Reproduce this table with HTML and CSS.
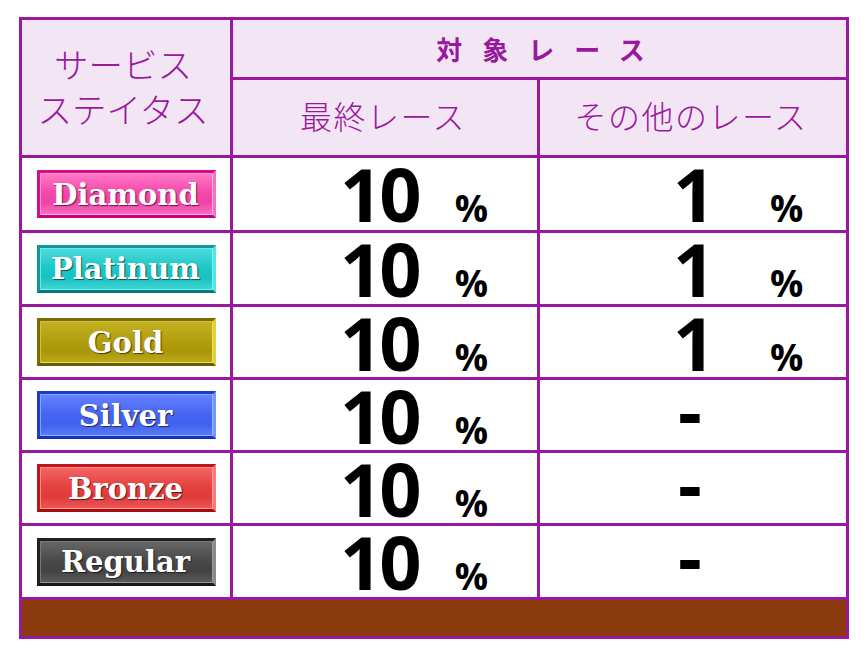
FILE: index.html
```html
<!DOCTYPE html>
<html lang="ja">
<head>
<meta charset="utf-8">
<title>サービスステイタス</title>
<link rel="stylesheet" href="styles.css">
</head>
<body>
<div class="table">
  <div class="hd status">サービス<br>ステイタス</div>
  <div class="hd target">対象レース</div>
  <div class="hd sub">最終レース</div>
  <div class="hd sub">その他のレース</div>

  <div class="cell badge-cell"><span class="badge diamond">Diamond</span></div>
  <div class="cell v2"><span class="num">10</span><span class="pct">%</span></div>
  <div class="cell v3"><span class="num">1</span><span class="pct">%</span></div>

  <div class="cell badge-cell"><span class="badge platinum">Platinum</span></div>
  <div class="cell v2"><span class="num">10</span><span class="pct">%</span></div>
  <div class="cell v3"><span class="num">1</span><span class="pct">%</span></div>

  <div class="cell badge-cell"><span class="badge gold">Gold</span></div>
  <div class="cell v2"><span class="num">10</span><span class="pct">%</span></div>
  <div class="cell v3"><span class="num">1</span><span class="pct">%</span></div>

  <div class="cell badge-cell"><span class="badge silver">Silver</span></div>
  <div class="cell v2"><span class="num">10</span><span class="pct">%</span></div>
  <div class="cell v3"><span class="num dash">-</span></div>

  <div class="cell badge-cell"><span class="badge bronze">Bronze</span></div>
  <div class="cell v2"><span class="num">10</span><span class="pct">%</span></div>
  <div class="cell v3"><span class="num dash">-</span></div>

  <div class="cell badge-cell"><span class="badge regular">Regular</span></div>
  <div class="cell v2"><span class="num">10</span><span class="pct">%</span></div>
  <div class="cell v3"><span class="num dash">-</span></div>

  <div class="footer"></div>
</div>
</body>
</html>
```
FILE: styles.css
```css
html, body {
  margin: 0;
  padding: 0;
  background: #ffffff;
}
body {
  font-family: "Open Sans", "Noto Sans CJK JP", sans-serif;
}
.table {
  margin: 17px 0 0 19px;
  width: 824px;
  padding: 3px;
  gap: 3px;
  background: #9a189e;
  display: grid;
  grid-template-columns: 208px 304px 306px;
  grid-template-rows: 57px 75px 72px 71px 70px 70px 70px 71px 36px;
}
.hd {
  background: #f3e6f4;
  color: #9a189e;
  font-family: "Noto Sans CJK JP", sans-serif;
  display: flex;
  align-items: center;
  justify-content: center;
  text-align: center;
}
.status {
  grid-row: 1 / 3;
  font-size: 34.5px;
  font-weight: 300;
  line-height: 45px;
  padding-bottom: 4px;
  padding-right: 6px;
}
.target {
  grid-column: 2 / 4;
  font-size: 26px;
  font-weight: 700;
  letter-spacing: 20px;
  padding-left: 22px;
  padding-bottom: 1px;
}
.sub {
  font-size: 32px;
  font-weight: 300;
  letter-spacing: 1.5px;
  padding-bottom: 5px;
  padding-right: 4px;
}
.cell {
  background: #ffffff;
}
.badge-cell {
  display: flex;
  align-items: center;
  justify-content: center;
  padding-left: 1px;
}
.badge {
  box-sizing: border-box;
  width: 179px;
  height: 48px;
  display: flex;
  align-items: center;
  justify-content: center;
  border: 3px solid;
  font-family: "DejaVu Serif", "Liberation Serif", serif;
  font-weight: 700;
  font-size: 29px;
  color: #ffffff;
  text-shadow: 1px 1px 1px rgba(0,0,0,0.6);
  padding-top: 1px;
  padding-right: 2px;
}
.diamond {
  border-color: #dc0a86 #f472c0 #c4027a #dc0a86;
  background: linear-gradient(180deg, #ff7ac6 0%, #f44aac 45%, #ef42a6 70%, #fb72c0 100%);
  box-shadow: inset 1px 1px 0 #ff94d2, inset -1px -1px 0 #ffb0de;
}
.platinum {
  border-color: #0b9898 #54e4e2 #077a7c #0b9898;
  background: linear-gradient(180deg, #4edcda 0%, #1ec8c8 45%, #19c2c2 70%, #40d6d4 100%);
  box-shadow: inset 1px 1px 0 #6ee8e6, inset -1px -1px 0 #7af0ee;
}
.gold {
  border-color: #7a6a00 #e0d040 #6a5c00 #7a6a00;
  background: linear-gradient(180deg, #c4b224 0%, #b2a010 45%, #a99606 70%, #bcaa1e 100%);
  box-shadow: inset 1px 1px 0 #d0c23c, inset -1px -1px 0 #ece058;
}
.silver {
  border-color: #1a3ad6 #7896ff #1230be #1a3ad6;
  background: linear-gradient(180deg, #6684ff 0%, #4666f2 45%, #4060ee 70%, #5a7afa 100%);
  box-shadow: inset 1px 1px 0 #88a2ff, inset -1px -1px 0 #98b0ff;
}
.bronze {
  border-color: #be1616 #ff7a7a #a60a0a #be1616;
  background: linear-gradient(180deg, #f46666 0%, #e64242 45%, #e03a3a 70%, #ee5858 100%);
  box-shadow: inset 1px 1px 0 #ff8c8c, inset -1px -1px 0 #ff9e9e;
}
.regular {
  border-color: #202020 #8a8a8a #181818 #202020;
  background: linear-gradient(180deg, #686868 0%, #4a4a4a 45%, #424242 70%, #5c5c5c 100%);
  box-shadow: inset 1px 1px 0 #787878, inset -1px -1px 0 #9a9a9a;
}
.v2, .v3 {
  display: flex;
  align-items: baseline;
  padding-top: 8px;
  color: #000000;
  font-family: "Open Sans", sans-serif;
  font-weight: 700;
}
.num {
  font-size: 74px;
  line-height: 56px;
}
.pct {
  font-size: 37px;
  line-height: 30px;
}
.v2 {
  padding-left: 107px;
}
.v2 .num {
  letter-spacing: -3px;
}
.v2 .pct {
  margin-left: 36px;
}
.v3 {
  padding-left: 133px;
}
.v3 .num {
  width: 42px;
  text-align: center;
}
.v3 .pct {
  margin-left: 55px;
}
.v3 .dash {
  margin-left: -4px;
  line-height: 40px;
  margin-top: 2px;
}
.footer {
  grid-column: 1 / 4;
  background: #8b3a0e;
}
```
